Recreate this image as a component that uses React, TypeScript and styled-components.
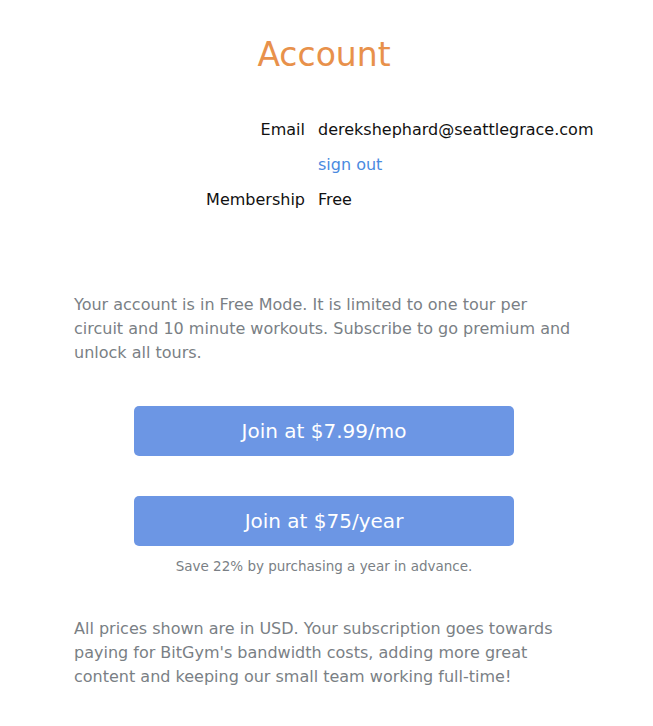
import React from 'react';
import styled, { createGlobalStyle } from 'styled-components';

const GlobalStyle = createGlobalStyle`
  body {
    margin: 0;
    background: #ffffff;
    font-family: "DejaVu Sans", "Noto Sans", sans-serif;
  }
`;

const Page = styled.div`
  width: 530px;
  margin-left: 74px;
  padding-top: 34px;
  padding-bottom: 20px;
`;

const Title = styled.h1`
  margin: 0 30px 0 0;
  text-align: center;
  font-size: 33px;
  font-weight: 400;
  line-height: 42px;
  color: #e8914b;
`;

const InfoTable = styled.div`
  display: grid;
  grid-template-columns: 231px auto;
  column-gap: 13px;
  margin-top: 36px;
`;

const Label = styled.div`
  text-align: right;
  font-size: 16px;
  line-height: 35px;
  color: #111111;
`;

const Value = styled.div<{ $link?: boolean }>`
  font-size: 16px;
  line-height: 35px;
  color: ${p => (p.$link ? '#4a8ae0' : '#111111')};
  cursor: ${p => (p.$link ? 'pointer' : 'default')};
`;

const Paragraph = styled.p<{ $top: number }>`
  margin: ${p => p.$top}px 0 0;
  font-size: 16px;
  line-height: 24px;
  color: #7a7f85;
`;

const Buttons = styled.div`
  display: flex;
  flex-direction: column;
  align-items: center;
  margin-top: 41px;
  margin-right: 30px;
`;

const JoinButton = styled.button<{ $top?: number }>`
  width: 380px;
  height: 50px;
  margin-top: ${p => p.$top || 0}px;
  border: none;
  border-radius: 5px;
  background: #6c96e4;
  color: #ffffff;
  font-family: inherit;
  font-size: 20px;
  cursor: pointer;
`;

const Note = styled.div`
  margin-top: 11px;
  font-size: 13.5px;
  line-height: 18px;
  color: #7a7f85;
  text-align: center;
`;

export default function App() {
  return (
    <>
      <GlobalStyle />
      <Page>
        <Title>Account</Title>
        <InfoTable>
          <Label>Email</Label>
          <Value>derekshephard@seattlegrace.com</Value>
          <Label />
          <Value $link>sign out</Value>
          <Label>Membership</Label>
          <Value>Free</Value>
        </InfoTable>
        <Paragraph $top={76}>
          Your account is in Free Mode. It is limited to one tour per
          <br />
          circuit and 10 minute workouts. Subscribe to go premium and
          <br />
          unlock all tours.
        </Paragraph>
        <Buttons>
          <JoinButton>Join at $7.99/mo</JoinButton>
          <JoinButton $top={40}>Join at $75/year</JoinButton>
          <Note>Save 22% by purchasing a year in advance.</Note>
        </Buttons>
        <Paragraph $top={42}>
          All prices shown are in USD. Your subscription goes towards
          <br />
          paying for BitGym's bandwidth costs, adding more great
          <br />
          content and keeping our small team working full-time!
        </Paragraph>
      </Page>
    </>
  );
}
